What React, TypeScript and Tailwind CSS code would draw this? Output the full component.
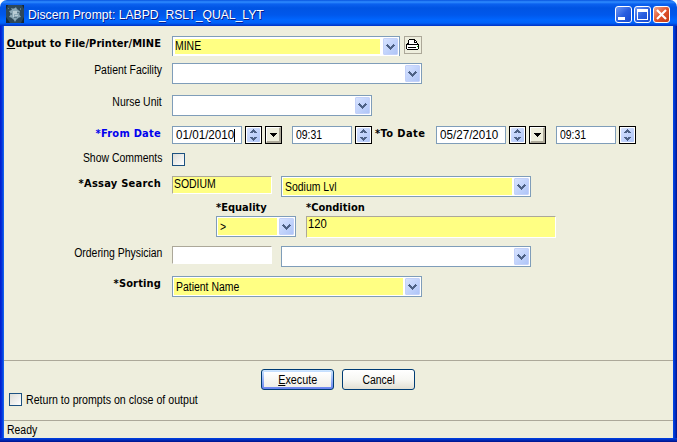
import type { ReactNode } from "react";

function T({ children, scale = "scale-x-[0.87]", origin = "origin-left" }: { children: ReactNode; scale?: string; origin?: string }) {
  return <span className={`inline-block ${origin} ${scale}`}>{children}</span>;
}

function ArrowCap() {
  return (
    <span className="flex h-[17px] w-[15px] shrink-0 items-center justify-center rounded-[1px] border border-[#c3d1f9] bg-linear-to-br from-[#d6e2ff] to-[#afc5f7]">
      <svg width="9" height="6" viewBox="0 0 9 6" shapeRendering="crispEdges" fill="#4d6185">
        <path d="M1 0h1v1H1zM7 0h1v1H7zM0 1h3v1H0zM6 1h3v1H6zM1 2h3v1H1zM5 2h3v1H5zM2 3h5v1H2zM3 4h3v1H3zM4 5h1v1H4z" />
      </svg>
    </span>
  );
}

function Combo({ box, children, inner = "" }: { box: string; children?: ReactNode; inner?: string }) {
  return (
    <div className={`flex shrink-0 gap-[2px] border border-[#7f9db9] bg-white p-px ${box}`}>
      <div className={`flex min-w-0 flex-1 items-center ${inner}`}>{children}</div>
      <ArrowCap />
    </div>
  );
}

function Spinner() {
  return (
    <span className="flex h-[18px] w-[17px] shrink-0 items-center justify-center border border-black bg-white p-px">
      <span className="flex h-full w-[13px] items-center justify-center rounded-[1px] bg-linear-to-br from-[#d6e2ff] to-[#afc5f7]">
        <svg width="7" height="12" viewBox="0 0 7 12" shapeRendering="crispEdges" fill="#4d6185">
          <path d="M3 0h1v1H3zM2 1h3v1H2zM1 2h5v1H1zM0 3h3v1H0zM4 3h3v1H4zM0 8h3v1H0zM4 8h3v1H4zM1 9h5v1H1zM2 10h3v1H2zM3 11h1v1H3z" />
        </svg>
      </span>
    </span>
  );
}

function DropButton() {
  return (
    <span className="flex h-[18px] w-[17px] shrink-0 border border-black">
      <span className="flex flex-1 items-center justify-center border-t border-r-2 border-b-2 border-l border-t-white border-r-[#aca899] border-b-[#aca899] border-l-white bg-[#eeeedd]">
        <svg width="7" height="4" viewBox="0 0 7 4" shapeRendering="crispEdges">
          <path d="M0 0h7v1h-1v1h-1v1h-1v1h-1v-1h-1v-1h-1v-1h-1z" />
        </svg>
      </span>
    </span>
  );
}

function DateBox({ box, children }: { box: string; children: ReactNode }) {
  return (
    <div className={`flex h-[18px] shrink-0 items-center border border-[#7f9db9] bg-white pl-[2.5px] ${box}`}>{children}</div>
  );
}

function SunkenBox({ box, children }: { box: string; children?: ReactNode }) {
  return (
    <div className={`shrink-0 border border-t-[#aca899] border-r-white border-b-white border-l-[#aca899] pl-[0.5px] leading-[14px] ${box}`}>
      {children}
    </div>
  );
}

function Label({ children }: { children: ReactNode }) {
  return (
    <span className="mr-[10px] w-[158px] shrink-0 text-right leading-[14px]">
      <T origin="origin-right">{children}</T>
    </span>
  );
}

function BoldLabel({ children }: { children: ReactNode }) {
  return <span className="mr-[10px] flex w-[158px] shrink-0 justify-end pt-px pr-px leading-[14px]">{children}</span>;
}

function B({ children, className = "" }: { children: ReactNode; className?: string }) {
  return (
    <b className={`font-['DejaVu_Sans_Condensed','DejaVu_Sans',sans-serif] text-[11px] font-bold ${className}`}>{children}</b>
  );
}

function Check() {
  return <span className="size-[13px] shrink-0 border border-[#1c5180] bg-linear-to-br from-[#dcdcd7] to-white" />;
}

function CaptionButtons() {
  return (
    <div className="mt-[6px] flex gap-[2px]">
      <span className="size-[17px] rounded-[3px] border border-white bg-linear-to-br from-[#6f97f4] via-[#2a5fe0] to-[#1648cf]">
        <span className="mt-[10px] ml-[2px] block h-[3px] w-[7px] bg-white" />
      </span>
      <span className="size-[17px] rounded-[3px] border border-white bg-linear-to-br from-[#6f97f4] via-[#2a5fe0] to-[#1648cf]">
        <span className="mt-[2px] ml-[2px] block h-[11px] w-[11px] border border-t-[3px] border-white" />
      </span>
      <span className="size-[17px] rounded-[3px] border border-white bg-linear-to-br from-[#f0a58c] via-[#e0532c] to-[#c43a12]">
        <svg className="block" width="15" height="15" viewBox="0 0 15 15" stroke="#fff" strokeWidth="2.2">
          <path d="M3 3l9 9M12 3l-9 9" />
        </svg>
      </span>
    </div>
  );
}

function AppIcon() {
  return (
    <svg className="mt-[5px] block" width="18" height="18" viewBox="0 0 18 18">
      <rect width="18" height="18" fill="#172735" />
      <path d="M2 0h14l2 4v8l-3 6H4L0 12V5z" fill="#2d4858" />
      <ellipse cx="9" cy="9" rx="4.5" ry="6" fill="#6a8896" />
      <path d="M5 3l3 1 2-2 1 3 3 1-1 3 2 3-4 1-2 4-2-4-4-1 2-3-2-3 3-1z" fill="#8ba8b5" />
      <path d="M7 6h4v3H8v3H7zM9 10h3v1H9z" fill="#b9cdd4" />
      <path d="M5 8h1v2H5zM11 7h2v1h-2zM8 12h3v1H8zM2 3h1v1H2zM14 3h1v2h-1z" fill="#5b7886" />
    </svg>
  );
}

function Printer() {
  return (
    <svg width="14" height="12" viewBox="0 0 14 12" shapeRendering="crispEdges">
      <path d="M3 1h6v1h1v1h1v2h1v1h1v4h-1v1H1v-1H0V6h1V5h1V3h1z" fill="#fff" />
      <path d="M3 0h6v1H3zM9 1h1v1H9zM10 2h1v2h-1zM2 1h1v3H2zM8 1h1v2h2v1H8zM1 4h2v1H1zM11 4h1v1h-1zM0 5h13v1H0zM0 6h1v4H0zM12 5h1v5h-1zM2 8h8v1H2zM1 10h11v1H1z" />
      <path d="M11 7h1v1h-1z" fill="#00c000" />
    </svg>
  );
}

export default function App() {
  return (
    <div className="flex h-[442px] w-[677px] flex-col bg-white font-['Liberation_Sans',Arial,sans-serif] text-[12px] leading-[14px] whitespace-nowrap text-black">
      <header className="flex h-[26px] shrink-0 rounded-t-[7px] bg-[linear-gradient(180deg,#0753df_0px,#2f8cff_2px,#0b61ef_4px,#0054e3_8px,#0058ec_15px,#0066ff_20px,#0062f8_23px,#0040d4_25px,#0032c6_26px)] pr-[7px] pl-[6px]">
        <AppIcon />
        <span className="mt-[7px] ml-[4px] flex-1 text-[13px] leading-4 text-white [text-shadow:1px_1px_0_#0a1883]">
          <T scale="scale-x-[0.937]">Discern Prompt: LABPD_RSLT_QUAL_LYT</T>
        </span>
        <CaptionButtons />
      </header>
      <div className="flex flex-1 flex-col bg-[linear-gradient(180deg,#0042e0_0px,#0038d4_1px,#001ea0_3px,#00138c_4px)] bg-[length:100%_4px] bg-bottom bg-no-repeat pb-1">
        <div className="flex flex-1 bg-[#eeeedd]">
          <div className="w-1 shrink-0 bg-linear-to-r from-[#0019cf] via-[#0831d9] to-[#1a6bf2]" />
          <main className="flex w-[669px] flex-col">
            <form className="flex h-[334px] flex-col pt-[10px]">
              <div className="flex h-[27px]">
                <BoldLabel><B className="tracking-[0.07px]"><u>O</u>utput to File/Printer/MINE</B></BoldLabel>
                <div className="flex h-5 items-start overflow-hidden">
                  <Combo box="h-[21px] w-[228px]" inner="border border-white bg-[#ffff83] pb-px"><T scale="scale-x-[0.87]">MINE</T></Combo>
                </div>
                <span className="ml-1 flex size-[18px] items-center justify-center border border-[#aca899]"><Printer /></span>
              </div>
              <div className="flex h-[32px]">
                <Label>Patient Facility</Label>
                <Combo box="h-[21px] w-[250px]" />
              </div>
              <div className="flex h-[31px]">
                <Label>Nurse Unit</Label>
                <Combo box="h-[21px] w-[200px]" />
              </div>
              <div className="flex h-[25px]">
                <BoldLabel><B className="tracking-[0.25px] text-[#0000ee]">*From Date</B></BoldLabel>
                <DateBox box="w-[70px]"><T scale="scale-x-[0.97]">01/01/2010</T><i className="-ml-[2px] h-[13px] w-px bg-black" /></DateBox>
                <div className="ml-[3px] flex gap-[3px]"><Spinner /><DropButton /></div>
                <DateBox box="ml-[10px] w-[60px]"><T>09:31</T></DateBox>
                <div className="ml-[3px] flex"><Spinner /></div>
                <span className="ml-[3px] w-[61px]"><B className="tracking-[0.4px]">*To Date</B></span>
                <DateBox box="w-[70px]"><T scale="scale-x-[0.97]">05/27/2010</T></DateBox>
                <div className="ml-[3px] flex gap-[3px]"><Spinner /><DropButton /></div>
                <DateBox box="ml-[10px] w-[60px]"><T>09:31</T></DateBox>
                <div className="ml-[3px] flex"><Spinner /></div>
              </div>
              <div className="flex h-[25px]">
                <Label>Show Comments</Label>
                <div className="flex pt-[2px]"><Check /></div>
              </div>
              <div className="flex h-[24px]">
                <BoldLabel><B className="tracking-[0.25px]">*Assay Search</B></BoldLabel>
                <SunkenBox box="h-[18px] w-[100px] bg-[#ffff83]"><T>SODIUM</T></SunkenBox>
                <Combo box="ml-[9px] h-[21px] w-[250px]" inner="bg-[#ffff83] pl-[2px]"><T>Sodium Lvl</T></Combo>
              </div>
              <div className="flex h-[16px] pl-[212px]">
                <span className="w-[90px]"><B>*Equality</B></span>
                <span><B>*Condition</B></span>
              </div>
              <div className="flex h-[30px] pl-[212px]">
                <Combo box="h-[21px] w-[80px]" inner="bg-[#ffff83] pl-[2px]"><T>&gt;</T></Combo>
                <SunkenBox box="ml-[10px] h-[22px] w-[250px] bg-[#ffff83]"><T scale="scale-x-[0.94]">120</T></SunkenBox>
              </div>
              <div className="flex h-[30px]">
                <Label>Ordering Physician</Label>
                <SunkenBox box="h-[18px] w-[100px] bg-white" />
                <Combo box="ml-[9px] h-[21px] w-[250px]" />
              </div>
              <div className="flex">
                <BoldLabel><B className="tracking-[0.15px]">*Sorting</B></BoldLabel>
                <Combo box="h-[21px] w-[250px]" inner="bg-[#ffff83] pl-[2px]"><T>Patient Name</T></Combo>
              </div>
            </form>
            <section className="h-[60px] border-t border-[#aca899] pt-2">
              <div className="flex gap-2 pl-[257px]">
                <button className="h-[21px] w-[73px] rounded-[3px] border border-[#003c74] bg-linear-to-b from-[#cee7ff] to-[#6982ee] p-[2px]">
                  <span className="flex h-full items-center justify-center bg-linear-to-b from-white to-[#f0efe8]">
                    <T origin="origin-center" scale="scale-x-[0.9]"><u>E</u>xecute</T>
                  </span>
                </button>
                <button className="flex h-[21px] w-[73px] items-center justify-center rounded-[3px] border border-[#003c74] bg-linear-to-b from-white via-[#f7f7f3] to-[#e2dfd3]">
                  <T origin="origin-center">Cancel</T>
                </button>
              </div>
              <label className="mt-[3px] flex gap-[3.5px] pl-[5px]"><Check /><T scale="scale-x-[0.885]">Return to prompts on close of output</T></label>
            </section>
            <footer className="flex-1 border-t border-[#aca899] pt-[2px] pl-[3px]"><T>Ready</T></footer>
          </main>
          <div className="w-1 shrink-0 bg-linear-to-r from-[#0048e8] via-[#0030c8] to-[#00138c]" />
        </div>
      </div>
    </div>
  );
}
